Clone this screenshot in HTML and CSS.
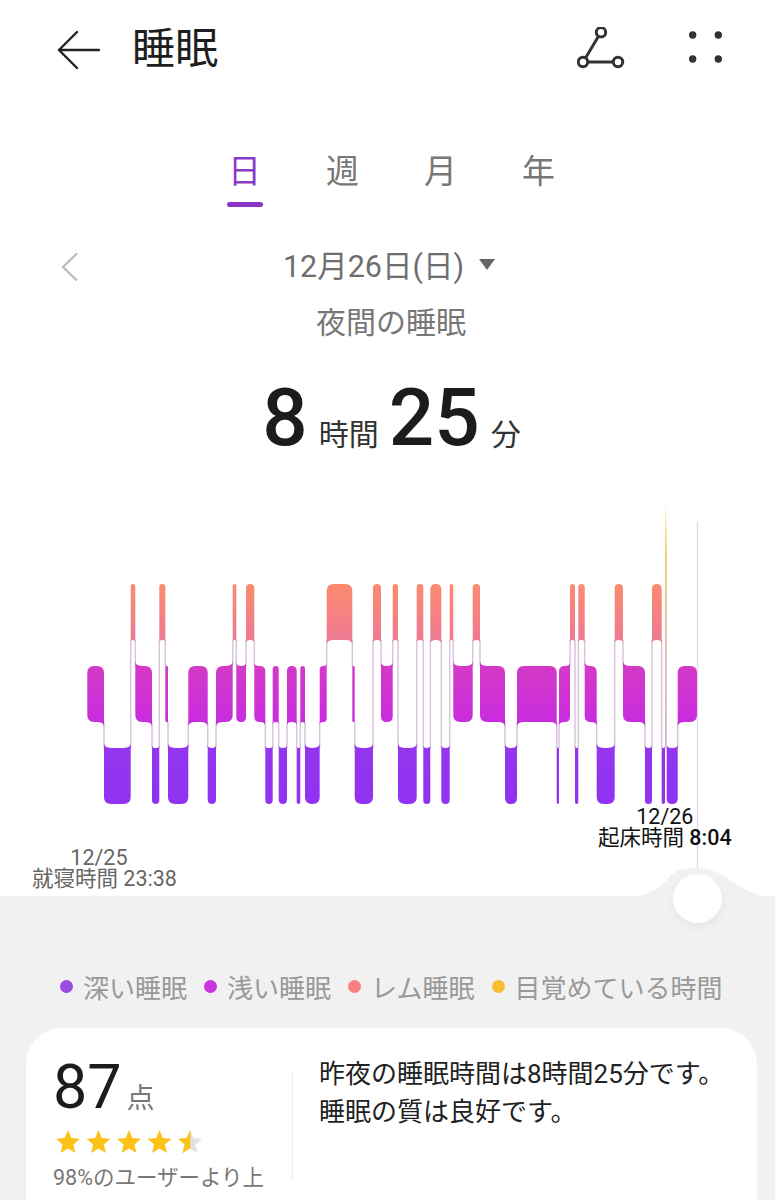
FILE: index.html
```html
<!DOCTYPE html>
<html lang="ja">
<head>
<meta charset="utf-8">
<title>睡眠</title>
<link rel="stylesheet" href="styles.css">
</head>
<body>
<main class="page">
  <header class="topbar">
    <svg class="back" viewBox="0 0 44 40" width="44" height="40"><path d="M21 2 3 20l18 18M3 20h40" fill="none" stroke="#222" stroke-width="2.4" stroke-linecap="round" stroke-linejoin="round"/></svg>
    <h1 class="title">睡眠</h1>
    <svg class="share" viewBox="0 0 50 42" width="50" height="42"><g fill="none" stroke="#333" stroke-width="3"><circle cx="24" cy="5.3" r="4.7"/><circle cx="6" cy="35" r="4.7"/><circle cx="41" cy="35" r="4.7"/><path d="M21.5 9.3 8.5 31M10.7 35h25.6"/></g></svg>
    <svg class="dots" viewBox="0 0 36 32" width="36" height="32"><g fill="#333"><circle cx="5.7" cy="4" r="3.7"/><circle cx="31.3" cy="4" r="3.7"/><circle cx="5.7" cy="28" r="3.7"/><circle cx="31.3" cy="28" r="3.7"/></g></svg>
  </header>

  <nav class="tabs">
    <a class="tab tab-active">日</a>
    <a class="tab">週</a>
    <a class="tab">月</a>
    <a class="tab">年</a>
  </nav>

  <div class="date-row">
    <svg class="chev" viewBox="0 0 18 30" width="18" height="30"><path d="M16 1.5 2 15l14 13.5" fill="none" stroke="#bdbdbd" stroke-width="2.4"/></svg>
    <div class="date"><span>12月26日(日)</span><i class="tri"></i></div>
  </div>
  <p class="subtitle">夜間の睡眠</p>
  <p class="total"><b>8</b><span class="unit unit-a">時間</span><b>25</b><span class="unit unit-b">分</span></p>

  <section class="chart">
    <svg class="chart-svg" viewBox="0 0 775 420" width="775" height="420">
      <defs>
        <linearGradient id="stage" gradientUnits="userSpaceOnUse" x1="0" y1="84" x2="0" y2="304">
          <stop offset="0" stop-color="#fb8b6e"/>
          <stop offset=".25" stop-color="#ee7a92"/>
          <stop offset=".37" stop-color="#d43ac6"/>
          <stop offset=".62" stop-color="#c92cde"/>
          <stop offset=".75" stop-color="#9436ee"/>
          <stop offset="1" stop-color="#8f32f2"/>
        </linearGradient>
        <linearGradient id="wake" gradientUnits="userSpaceOnUse" x1="0" y1="57" x2="0" y2="248">
          <stop offset="0" stop-color="#ecbf6a"/>
          <stop offset="1" stop-color="#cdb4d6"/>
        </linearGradient>
      </defs>
      <line class="end-line" x1="697.5" y1="21" x2="697.5" y2="370"/>
      <g id="links"></g>
      <g id="bars"></g>
      <path class="spike" d="M665 57 665.8 2 666.7 57Z"/>
      <path class="spike-tail" d="M665 57h1.7V248H665Z"/>
    </svg>
    <div class="stamp stamp-wake"><div>12/26</div><div>起床時間 <b>8:04</b></div></div>
    <div class="stamp stamp-bed"><div>12/25</div><div>就寝時間 23:38</div></div>
  </section>

  <section class="lower">
    <svg class="bump" viewBox="0 0 155 30" width="155" height="30"><path d="M0 30C28 30 40 22 50 9 56 3 65 1 77 1 95 1 105 10 118 18 130 26 142 30 155 30Z" fill="#f1f1f1"/></svg>
    <div class="knob"></div>
    <ul class="legend">
      <li class="legend-item"><i class="dot dot-deep"></i>深い睡眠</li>
      <li class="legend-item"><i class="dot dot-light"></i>浅い睡眠</li>
      <li class="legend-item"><i class="dot dot-rem"></i>レム睡眠</li>
      <li class="legend-item"><i class="dot dot-awake"></i>目覚めている時間</li>
    </ul>
    <article class="card">
      <div class="score">
        <div class="points"><b>87</b><span>点</span></div>
        <svg class="stars" viewBox="0 0 150 24" width="150" height="24">
          <defs>
            <path id="star" d="M12 0l3.3 8.1 8.7.7-6.6 5.7 2 8.5L12 18.4 4.6 23l2-8.5L0 8.8l8.7-.7z"/>
            <clipPath id="half"><rect x="0" y="0" width="12.5" height="24"/></clipPath>
          </defs>
          <use href="#star" class="star-on"/>
          <use href="#star" class="star-on" x="30.5"/>
          <use href="#star" class="star-on" x="61"/>
          <use href="#star" class="star-on" x="91.5"/>
          <g transform="translate(122)"><use href="#star" class="star-off"/><use href="#star" class="star-on" clip-path="url(#half)"/></g>
        </svg>
        <p class="rank">98%のユーザーより上</p>
      </div>
      <p class="summary">昨夜の睡眠時間は8時間25分です。<br>睡眠の質は良好です。</p>
    </article>
  </section>
</main>
<script src="chart.js"></script>
</body>
</html>
```
FILE: styles.css
```css
* { box-sizing: border-box; }
html, body { margin: 0; padding: 0; height: 1200px; overflow: hidden; background: #fff; }
body { font-family: Roboto, "Noto Sans CJK JP", sans-serif; color: #222; }
.page { width: 775px; height: 1200px; overflow: hidden; }

.topbar { display: flex; align-items: center; height: 96px; padding: 3px 52px 0 56px; }
.back { flex: none; }
.title { margin: 0 0 0 32px; font-size: 43px; font-weight: 400; line-height: 1; flex: 1; color: #1e1e1e; }
.share { flex: none; margin: -3px 60px 0 0; }
.dots { flex: none; margin-top: -5px; }

.tabs { display: flex; justify-content: center; padding: 49px 0 0 8px; height: 111px; }
.tab { width: 98px; height: 62px; text-align: center; font-size: 33px; line-height: 54px; color: #777; position: relative; }
.tab-active { color: #8a3cc6; }
.tab-active::after { content: ""; position: absolute; left: 31px; right: 31px; bottom: 0; height: 5px; border-radius: 3px; background: #8a35c8; }

.date-row { display: grid; grid-template-columns: 1fr auto 1fr; align-items: center; height: 46px; padding: 0 0 0 61px; margin-top: 37px; }
.chev { grid-column: 1; }
.date { grid-column: 2; display: flex; align-items: center; gap: 15px; font-size: 30.5px; color: #6f6f6f; line-height: 46px; margin-left: -58px; }
.tri { width: 0; height: 0; border: 8px solid transparent; border-top: 11px solid #666; border-bottom: 0; margin-bottom: 5px; }
.subtitle { margin: 10px 0 0 7px; text-align: center; font-size: 30px; line-height: 46px; color: #777; }

.total { margin: 28px 0 0 8px; height: 88px; display: flex; justify-content: center; align-items: baseline; line-height: 88px; }
.total b { font-size: 80px; font-weight: 500; color: #1c1c1c; }
.unit { font-size: 30px; color: #333; }
.unit-a { margin: 0 10px 0 11px; }
.unit-b { margin-left: 11px; }

.chart { position: relative; height: 400px; margin-top: 34px; }
.chart-svg { display: block; overflow: visible; position: absolute; left: 0; top: 4px; }
.end-line { stroke: #e2d6f2; stroke-width: 1.3; }
.spike { fill: #f3c544; }
.spike-tail { fill: url(#wake); }
.stamp { position: absolute; text-align: center; font-size: 21.5px; line-height: 21px; white-space: nowrap; }
.stamp b { font-weight: 500; }
.stamp-wake { left: 598px; top: 310px; color: #111; }
.stamp-bed { left: 32px; top: 351px; color: #666; }
.stamp-bed div:first-child { margin-right: 11px; }

.lower { position: relative; height: 304px; background: #f1f1f1; padding: 75px 18px 0 26px; }
.bump { position: absolute; left: 620px; top: -29px; }
.knob { position: absolute; left: 673px; top: -22px; width: 49px; height: 49px; border-radius: 50%; background: #fff; box-shadow: 0 4px 8px rgba(0,0,0,.05); }
.legend { list-style: none; margin: 0 0 0 34px; padding: 0; display: flex; gap: 17px; height: 57px; }
.legend-item { display: flex; align-items: center; gap: 10px; height: 30px; font-size: 26px; color: #999; white-space: nowrap; }
.dot { width: 13px; height: 13px; border-radius: 50%; }
.dot-deep { background: #9a4ae0; }
.dot-light { background: #cb35de; }
.dot-rem { background: #f88080; }
.dot-awake { background: #f8bd30; }

.card { display: flex; height: 240px; background: #fff; border-radius: 36px; padding: 33px 28px 0 28px; }
.score { width: 239px; flex: none; height: 109px; border-right: 1.5px solid #eee; margin-top: 10px; }
.points { display: flex; align-items: baseline; margin: -18px 0 0 -1px; height: 68px; }
.points b { font-size: 61px; font-weight: 400; line-height: 68px; color: #1c1c1c; }
.points span { font-size: 28px; color: #777; margin-left: 5px; }
.stars { display: block; margin: 9px 0 0 2px; }
.star-on { fill: #fcc21a; }
.star-off { fill: #e2e2e2; }
.rank { margin: 9px 0 0 -1px; font-size: 21.5px; line-height: 30px; color: #777; white-space: nowrap; }
.summary { margin: -6px 0 0 26px; font-size: 26px; line-height: 38px; color: #222; white-space: nowrap; }
```
FILE: chart.js
```js
// Sleep stages as [stage, end x]; the first bar starts at x = 87.
var START = 87.3;
var STAGES = [
  ['L',104],['D',130.7],['R',135.3],['L',152],['D',159.3],['R',165.3],['L',168],['D',188.3],
  ['L',207.7],['D',216],['L',232.7],['R',236.3],['L',246],['R',254.3],['L',265.3],['D',272.7],
  ['L',278.7],['D',287],['L',296.7],['D',300.3],['L',305],['D',319.7],['L',326.7],['R',352.3],
  ['L',354.7],['D',373],['R',381],['L',392.7],['R',398],['D',416.7],['R',423.3],['D',430.3],
  ['R',441.3],['D',449.7],['R',453.3],['L',472.7],['R',480],['L',505],['D',517],['L',556.7],
  ['D',559],['L',570],['R',575],['D',578.3],['R',584.7],['L',596.7],['D',614.7],['R',623],
  ['L',645],['D',652],['R',661.7],['D',665],['A',666.7],['D',677.7],['L',697]
];
// Band of each stage in chart coordinates (chart origin sits at page y = 500).
var BANDS = { R: [84, 140], L: [166, 222], D: [248, 304], A: [2, 57] };
var NS = 'http://www.w3.org/2000/svg';

function add(parent, tag, attrs) {
  var el = document.createElementNS(NS, tag);
  for (var k in attrs) el.setAttribute(k, attrs[k]);
  parent.appendChild(el);
}

function barPath(x0, x1, band, prev, next) {
  var t = band[0], b = band[1];
  var r = Math.min(7, (x1 - x0) / 2);
  var above = function (n) { return n && BANDS[n][0] < t; };
  var below = function (n) { return n && BANDS[n][0] > t; };
  var tl = above(prev) ? t - r * 0.7 : t + r;
  var tr = above(next) ? t - r * 0.7 : t + r;
  var bl = below(prev) ? b + r * 0.7 : b - r;
  var br = below(next) ? b + r * 0.7 : b - r;
  return 'M' + x0 + ' ' + tl + 'Q' + x0 + ' ' + t + ' ' + (x0 + r) + ' ' + t +
    'L' + (x1 - r) + ' ' + t + 'Q' + x1 + ' ' + t + ' ' + x1 + ' ' + tr +
    'L' + x1 + ' ' + br + 'Q' + x1 + ' ' + b + ' ' + (x1 - r) + ' ' + b +
    'L' + (x0 + r) + ' ' + b + 'Q' + x0 + ' ' + b + ' ' + x0 + ' ' + bl + 'Z';
}

var bars = document.getElementById('bars');
var links = document.getElementById('links');
var x = START;
STAGES.forEach(function (s, i) {
  var prev = i ? STAGES[i - 1][0] : null;
  var next = STAGES[i + 1] ? STAGES[i + 1][0] : null;
  if (s[0] !== 'A') {
    add(bars, 'path', { d: barPath(x, s[1], BANDS[s[0]], prev, next), fill: 'url(#stage)' });
  }
  if (next && next !== 'A' && s[0] !== 'A') {
    var a = BANDS[s[0]], c = BANDS[next];
    add(links, 'line', {
      x1: s[1], x2: s[1],
      y1: Math.min(a[1], c[1]), y2: Math.max(a[0], c[0]),
      stroke: '#d8c6dc', 'stroke-width': 1.5
    });
  }
  x = s[1];
});
```
